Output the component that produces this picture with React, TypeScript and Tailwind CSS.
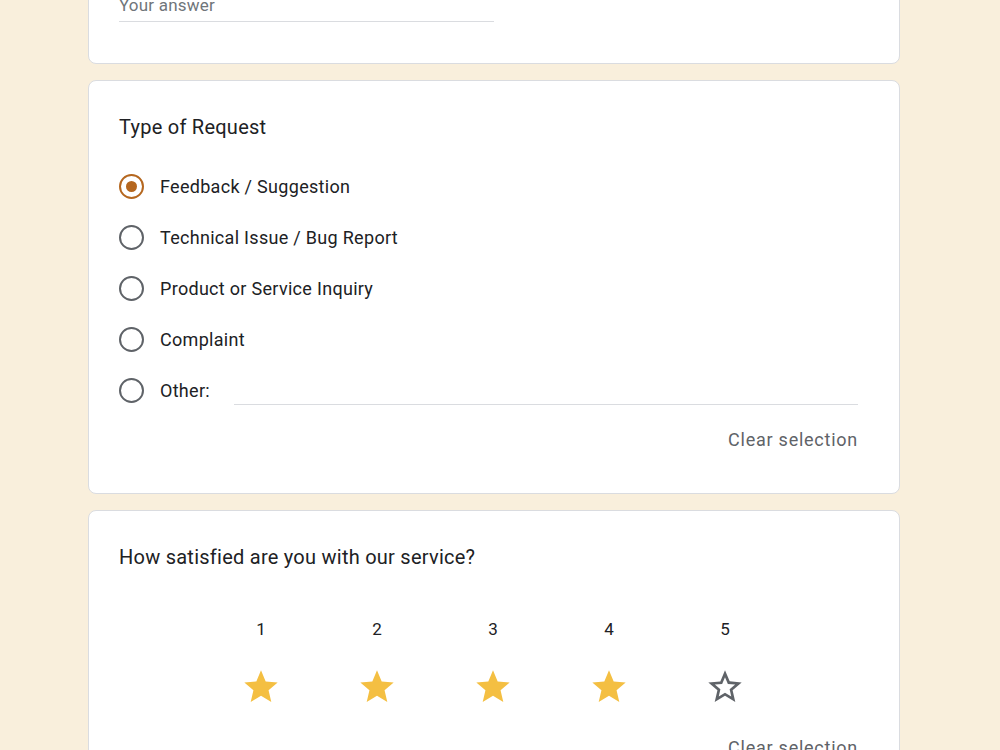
import { useState } from 'react';

const options = [
  'Feedback / Suggestion',
  'Technical Issue / Bug Report',
  'Product or Service Inquiry',
  'Complaint',
];

function Radio({ checked }: { checked: boolean }) {
  return (
    <span
      className={`flex h-[25px] w-[25px] shrink-0 items-center justify-center rounded-full border-2 ${
        checked ? 'border-[#b5671f]' : 'border-[#5f6368]'
      }`}
    >
      {checked && <span className="h-[11px] w-[11px] rounded-full bg-[#b5671f]" />}
    </span>
  );
}

function Star({ filled }: { filled: boolean }) {
  return (
    <svg viewBox="0 0 24 24" className="h-[40px] w-[40px]">
      {filled ? (
        <path fill="#f4bf42" d="M12 17.27L18.18 21l-1.64-7.03L22 9.24l-7.19-.61L12 2 9.19 8.63 2 9.24l5.46 4.73L5.82 21z" />
      ) : (
        <path
          fill="#5f6368"
          d="M22 9.24l-7.19-.62L12 2 9.19 8.63 2 9.24l5.46 4.73L5.82 21 12 17.27 18.18 21l-1.63-7.03L22 9.24zM12 15.4l-3.76 2.27 1-4.28-3.32-2.88 4.38-.38L12 6.1l1.71 4.04 4.38.38-3.32 2.88 1 4.28L12 15.4z"
        />
      )}
    </svg>
  );
}

function ClearButton({ onClick }: { onClick: () => void }) {
  return (
    <button className="text-[18px] leading-[24px] font-normal tracking-[0.75px] text-[#5f6368]" onClick={onClick}>
      Clear selection
    </button>
  );
}

export default function App() {
  const [choice, setChoice] = useState(0);
  const [rating, setRating] = useState(4);

  return (
    <div className="min-h-screen overflow-hidden bg-[#f9efdc] pl-[88px] font-['Roboto',sans-serif] text-[#202124]">
      <div className="-mt-[35px] flex w-[812px] flex-col gap-[16px] pb-10">
        {/* Short answer card */}
        <div className="rounded-lg border border-[#dadce0] bg-white px-[30px] pt-[24px] pb-[41px]">
          <div className="flex h-[32px] w-[375px] items-center border-b border-[#dadce0] text-[17px] tracking-[0.2px] text-[#70757a]">
            Your answer
          </div>
        </div>

        {/* Multiple choice card */}
        <div className="rounded-lg border border-[#dadce0] bg-white pt-[32px] pr-[41px] pb-[41px] pl-[30px]">
          <div className="text-[20px] leading-[28px] tracking-[0.25px]">Type of Request</div>
          <div className="mt-[20px] flex flex-col">
            {options.map((o, i) => (
              <div key={o} className="flex h-[51px] cursor-pointer items-center gap-[16px]" onClick={() => setChoice(i)}>
                <Radio checked={choice === i} />
                <span className="text-[18px] tracking-[0.3px]">{o}</span>
              </div>
            ))}
            <div className="flex h-[51px] items-center gap-[16px]" onClick={() => setChoice(4)}>
              <Radio checked={choice === 4} />
              <span className="text-[18px] tracking-[0.3px]">Other:</span>
              <div className="ml-[8px] h-[28px] flex-1 border-b border-[#dadce0]" />
            </div>
          </div>
          <div className="mt-[12px] flex justify-end">
            <ClearButton onClick={() => setChoice(-1)} />
          </div>
        </div>

        {/* Rating card */}
        <div className="rounded-lg border border-[#dadce0] bg-white pt-[32px] pr-[41px] pb-[41px] pl-[30px]">
          <div className="text-[20px] leading-[28px] tracking-[0.25px]">How satisfied are you with our service?</div>
          <div className="mt-[46px] flex justify-center pl-[9px]">
            {[1, 2, 3, 4, 5].map((n) => (
              <div key={n} className="flex w-[116px] flex-col items-center">
                <span className="text-[17px] leading-[24px]">{n}</span>
                <button className="mt-[26px]" onClick={() => setRating(n)}>
                  <Star filled={n <= rating} />
                </button>
              </div>
            ))}
          </div>
          <div className="mt-[29px] flex justify-end">
            <ClearButton onClick={() => setRating(0)} />
          </div>
        </div>
      </div>
    </div>
  );
}
